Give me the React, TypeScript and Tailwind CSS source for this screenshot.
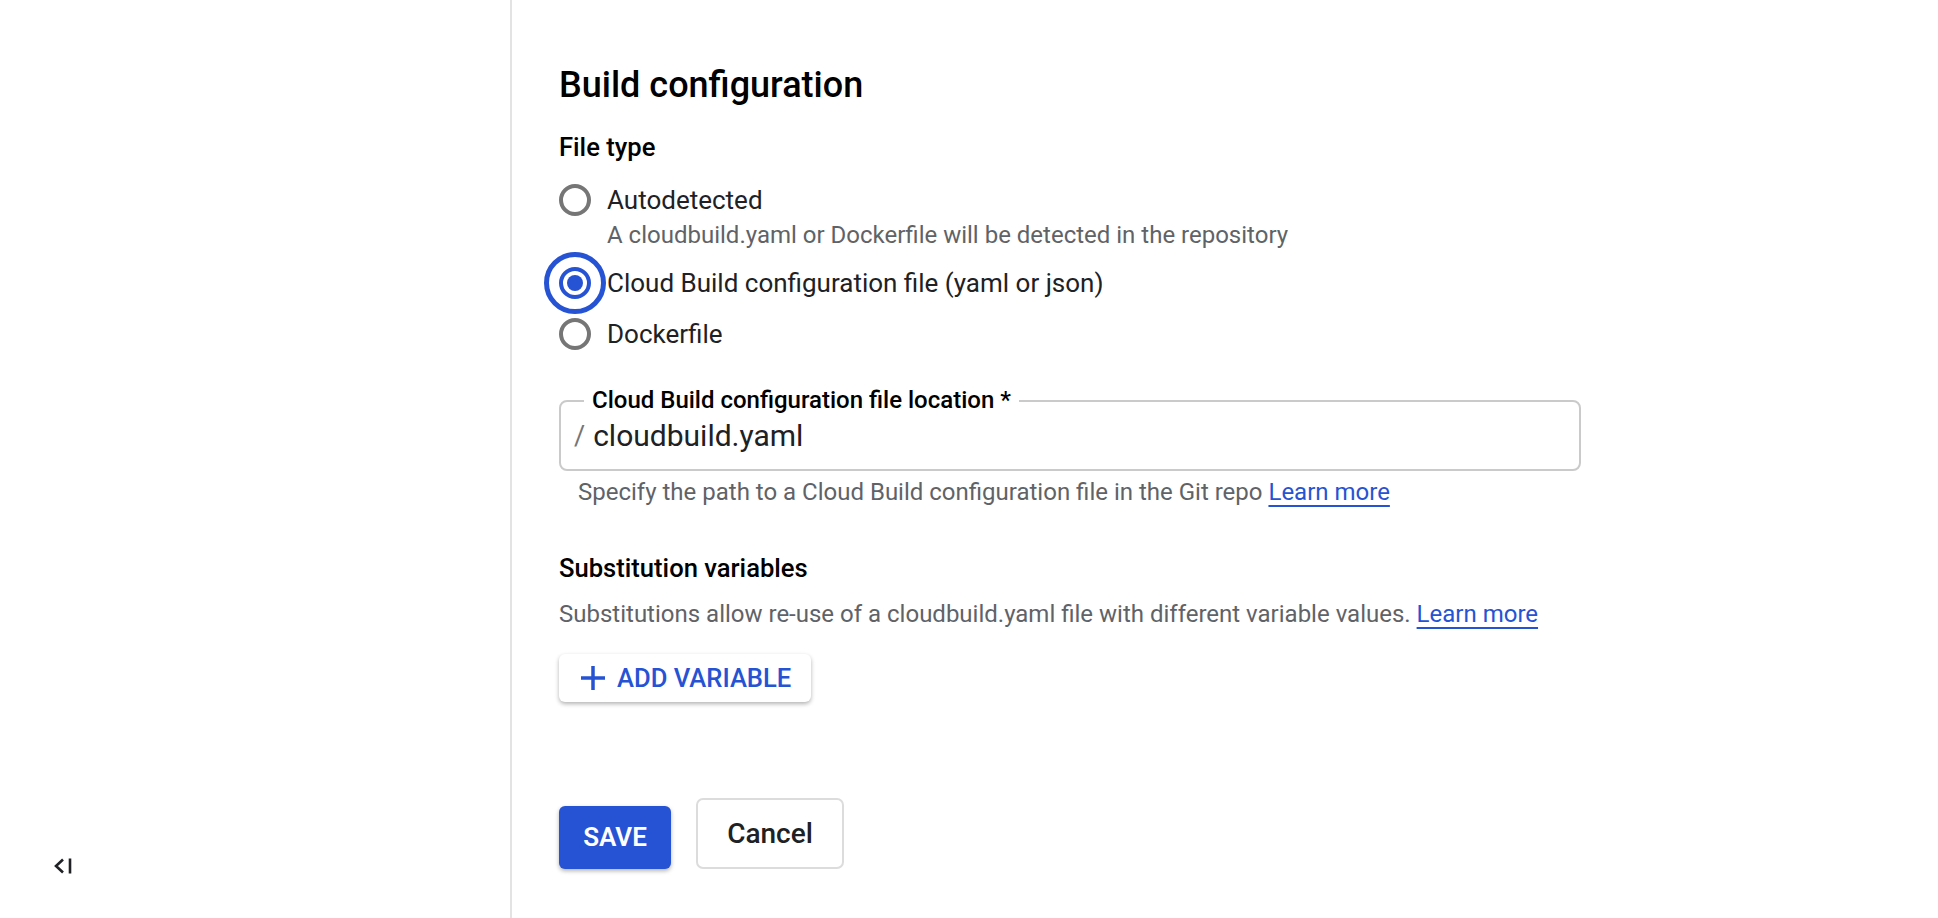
const font = { fontFamily: "Roboto, 'Liberation Sans', sans-serif" };

const Radio = ({ checked }: { checked?: boolean }) => {
  if (checked) {
    return (
      <div className="relative w-[32px] h-[32px] shrink-0">
        <div className="absolute -inset-[15px] rounded-full border-[5px] border-[#2553d3]"></div>
        <div className="w-[32px] h-[32px] rounded-full border-[4px] border-[#2553d3] flex items-center justify-center">
          <div className="w-[16px] h-[16px] rounded-full bg-[#2553d3]"></div>
        </div>
      </div>
    );
  }
  return <div className="w-[32px] h-[32px] shrink-0 rounded-full border-[4px] border-[#767676]"></div>;
};

const App = () => {
  return (
    <div className="flex h-[918px] w-full bg-white text-[#202124]" style={font}>
      {/* Sidebar */}
      <aside className="w-[512px] shrink-0 border-r-2 border-[#e3e3e3] flex flex-col justify-end pb-[44px] pl-[53px]">
        <svg width="20" height="16" viewBox="0 0 20 16" fill="none" stroke="#202124" strokeWidth="2.6">
          <path d="M10 1.5 L3 8 L10 14.5" />
          <path d="M17 0.5 V15.5" />
        </svg>
      </aside>

      {/* Main */}
      <main className="flex-1 pl-[47px] pt-[64px]">
        <h2 className="text-[36px] leading-[42px] font-medium text-black">Build configuration</h2>

        <h3 className="mt-[25px] text-[25.6px] leading-[32px] font-medium text-black">File type</h3>

        <div className="mt-[11px]">
          <label className="flex items-center h-[51px] gap-[16px]">
            <Radio />
            <span className="text-[26px] leading-[32px]">Autodetected</span>
          </label>
          <p className="-mt-[4px] mb-[8px] pl-[48px] text-[24px] leading-[28px] text-[#5f6368]">
            A cloudbuild.yaml or Dockerfile will be detected in the repository
          </p>
          <label className="flex items-center h-[51px] gap-[16px]">
            <Radio checked />
            <span className="text-[26px] leading-[32px]">Cloud Build configuration file (yaml or json)</span>
          </label>
          <label className="flex items-center h-[51px] gap-[16px]">
            <Radio />
            <span className="text-[26px] leading-[32px]">Dockerfile</span>
          </label>
        </div>

        {/* Location field */}
        <div className="mt-[41px] w-[1022px]">
          <div className="relative h-[71px] rounded-[8px] border-2 border-[#cacaca] flex items-center pl-[13px] gap-[8px]">
            <span className="absolute -top-[14px] left-[23px] bg-white px-[8px] text-[24px] leading-[24px] font-medium text-black">
              Cloud Build configuration file location *
            </span>
            <span className="text-[27px] leading-[36px] text-[#757575]">/</span>
            <span className="text-[30px] leading-[36px]">cloudbuild.yaml</span>
          </div>
          <p className="mt-[7px] pl-[19px] text-[24px] leading-[28px] text-[#5f6368]">
            Specify the path to a Cloud Build configuration file in the Git repo{" "}
            <a className="text-[#2553d3] underline underline-offset-[5px]">Learn more</a>
          </p>
        </div>

        <h3 className="mt-[46px] text-[25.6px] leading-[32px] font-medium text-black">Substitution variables</h3>
        <p className="mt-[16px] text-[24px] leading-[28px] text-[#5f6368]">
          Substitutions allow re-use of a cloudbuild.yaml file with different variable values.{" "}
          <a className="text-[#2553d3] underline underline-offset-[5px]">Learn more</a>
        </p>

        <button className="mt-[26px] h-[48px] w-[252px] flex items-center gap-[12px] pl-[22px] rounded-[6px] bg-white shadow-[0_2px_4px_rgba(0,0,0,0.3)] text-[#2553d3] text-[25.6px] font-medium">
          <svg width="24" height="24" viewBox="0 0 24 24" fill="none" stroke="#2553d3" strokeWidth="3.5">
            <path d="M12 0 V24 M0 12 H24" />
          </svg>
          <span>ADD VARIABLE</span>
        </button>

        <div className="mt-[96px] flex items-end gap-[25px]">
          <button className="h-[63px] w-[112px] rounded-[6px] bg-[#2553d3] text-white text-[26px] font-semibold shadow-[0_2px_4px_rgba(0,0,0,0.3)]">
            SAVE
          </button>
          <button className="h-[71px] w-[148px] rounded-[7px] border-2 border-[#dcdcdc] bg-white text-[28px] font-medium text-[#202124]">
            Cancel
          </button>
        </div>
      </main>
    </div>
  );
};

export default App;
